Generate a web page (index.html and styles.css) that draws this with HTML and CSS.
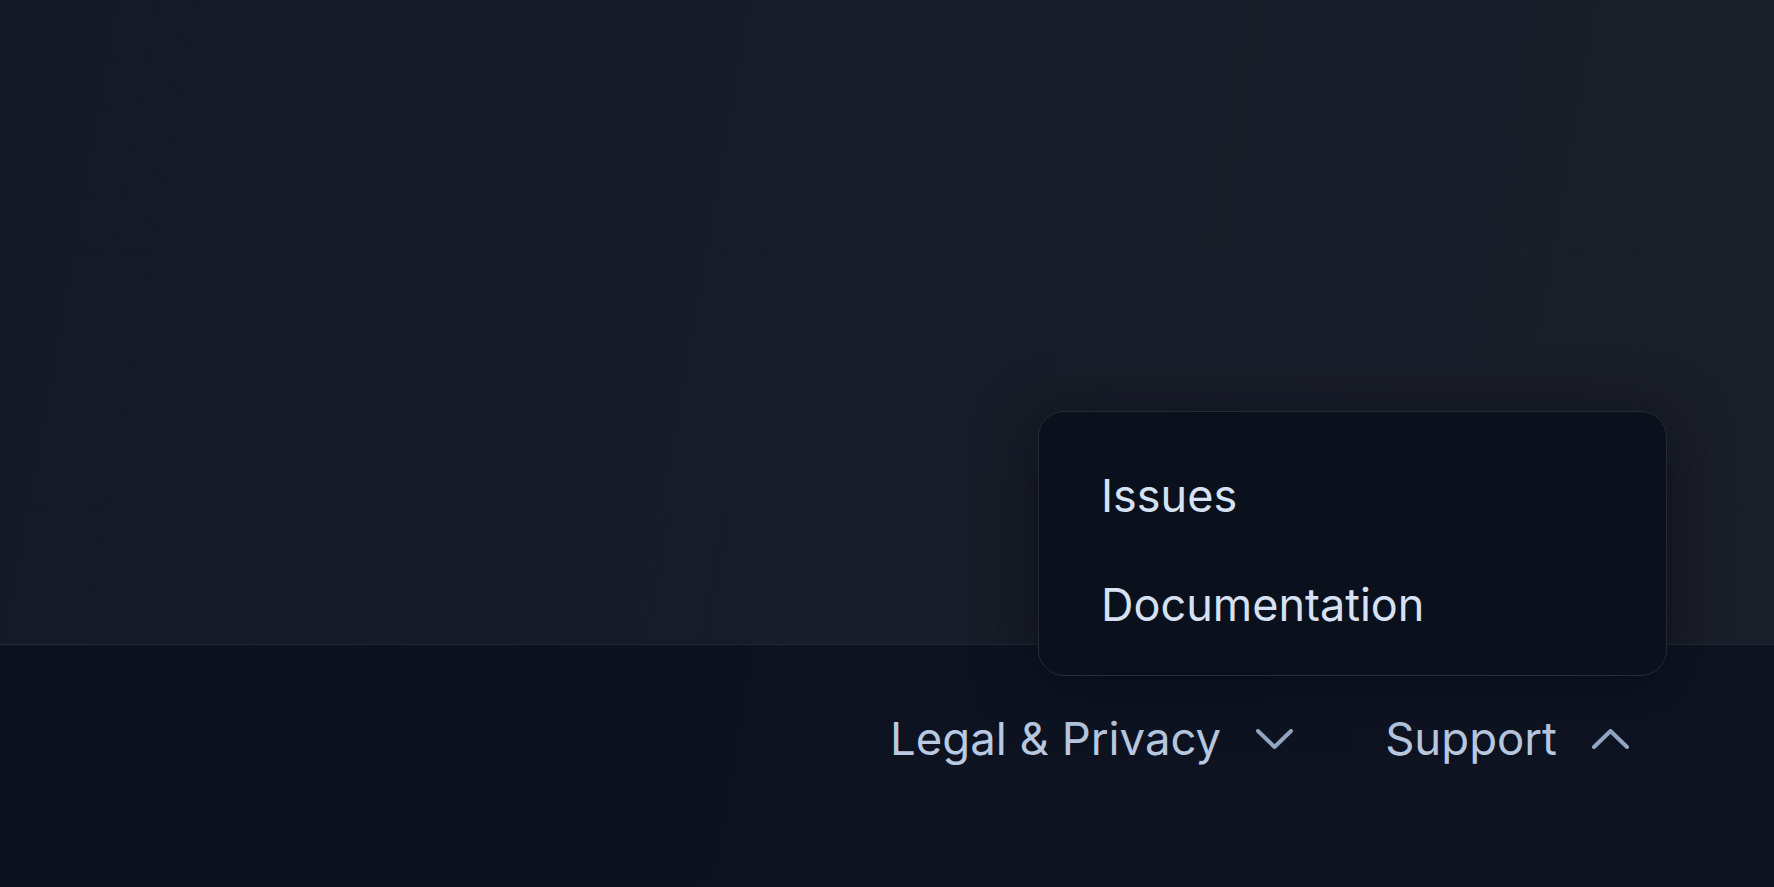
FILE: index.html
```html
<!DOCTYPE html>
<html lang="en">
<head>
<meta charset="utf-8">
<title>Footer</title>
<link rel="stylesheet" href="styles.css">
</head>
<body>
<div class="page">
  <main class="main"></main>
  <footer class="footer">
    <nav class="footer-nav">
      <div class="footer-item">
        <span class="footer-label">Legal &amp; Privacy</span>
        <svg class="chevron" viewBox="0 0 37 20" width="37" height="20" aria-hidden="true"><polyline points="2,2 18.5,18 35,2"/></svg>
      </div>
      <div class="footer-item footer-item--open">
        <span class="footer-label">Support</span>
        <svg class="chevron" viewBox="0 0 37 20" width="37" height="20" aria-hidden="true"><polyline points="2,18 18.5,2 35,18"/></svg>
        <div class="menu">
          <a class="menu-link">Issues</a>
          <a class="menu-link">Documentation</a>
        </div>
      </div>
    </nav>
  </footer>
</div>
</body>
</html>
```
FILE: styles.css
```css
html, body {
  margin: 0;
  padding: 0;
  height: 100%;
}
body {
  background: #0d1220;
  font-family: Inter, "Noto Sans", "Liberation Sans", sans-serif;
  overflow: hidden;
}
.page {
  display: flex;
  flex-direction: column;
  height: 887px;
}
.main {
  height: 645px;
  flex: none;
  box-sizing: border-box;
  border-bottom: 1px solid #232937;
  background: linear-gradient(100deg, #141925 0%, #171c28 50%, #1a1e29 100%);
}
.footer {
  flex: 1;
  background: linear-gradient(100deg, #0c111f 0%, #0e1322 60%, #0f1422 100%);
}
.footer-nav {
  display: flex;
  justify-content: flex-end;
  align-items: center;
  gap: 92px;
  padding: 69px 145px 0 0;
}
.footer-item {
  position: relative;
  display: flex;
  align-items: center;
  gap: 35px;
  height: 50px;
}
.footer-label {
  font-size: 45.5px;
  line-height: 50px;
  color: #b8c9e1;
}
.chevron {
  display: block;
  fill: none;
  stroke: #93a8c5;
  stroke-width: 4;
  stroke-linecap: round;
  stroke-linejoin: round;
}
.menu {
  position: absolute;
  right: -38px;
  bottom: calc(100% + 38px);
  width: 629px;
  height: 265px;
  box-sizing: border-box;
  padding: 57px 0 0 62px;
  display: flex;
  flex-direction: column;
  gap: 55px;
  background: #0b101d;
  border: 1px solid #232a38;
  border-radius: 26px;
  box-shadow: 0 10px 60px rgba(5, 8, 15, 0.55);
}
.menu-link {
  display: block;
  font-size: 45px;
  line-height: 54px;
  color: #d6e2f4;
}
```
